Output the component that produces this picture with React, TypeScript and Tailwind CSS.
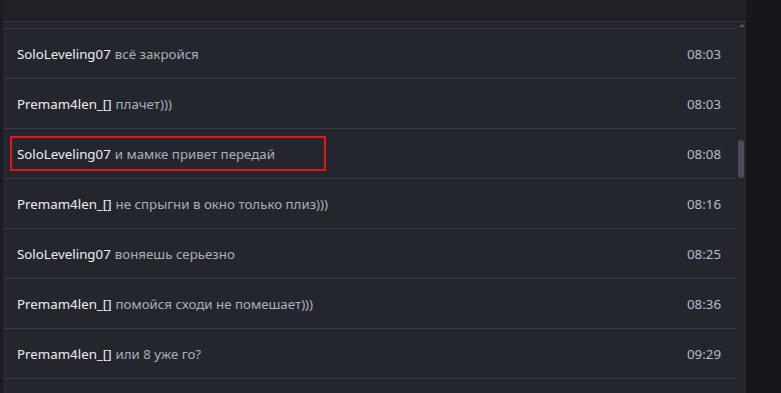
import React from 'react';

const MESSAGES = [
  { user: 'SoloLeveling07', text: 'всё закройся', time: '08:03' },
  { user: 'Premam4len_[]', text: 'плачет)))', time: '08:03' },
  { user: 'SoloLeveling07', text: 'и мамке привет передай', time: '08:08', marked: true },
  { user: 'Premam4len_[]', text: 'не спрыгни в окно только плиз)))', time: '08:16' },
  { user: 'SoloLeveling07', text: 'воняешь серьезно', time: '08:25' },
  { user: 'Premam4len_[]', text: 'помойся сходи не помешает)))', time: '08:36' },
  { user: 'Premam4len_[]', text: 'или 8 уже го?', time: '09:29' },
];

export default function App() {
  return (
    <div className="flex h-[393px] w-[781px] overflow-hidden bg-[#23262d] text-[13.3px] font-['Noto_Sans',sans-serif]">
      <div className="w-[3px] shrink-0 bg-[#1b1d22]" />
      <div className="flex flex-1 flex-col">
        <div className="h-[22px] shrink-0 border-b border-[#383b43] bg-[#1f2127]" />
        <div className="flex flex-1">
          <div className="flex flex-1 flex-col">
            <div className="h-[7px] shrink-0 border-b border-[#383b43]" />
            {MESSAGES.map((m, i) => (
              <div key={i} className="relative flex h-[50px] shrink-0 items-center justify-between border-b border-[#383b43] pl-[14px] pr-[15px] pt-[3px]">
                <div className="flex gap-[4px]">
                  <span className="text-[#eceef2]">{m.user}</span>
                  <span className="text-[#a9b0bc]">{m.text}</span>
                </div>
                <span className="text-[#b3bdcc]">{m.time}</span>
                {m.marked && (
                  <div className="absolute left-[7px] top-[7px] h-[35px] w-[316px] border-2 border-[#e5141b]" />
                )}
              </div>
            ))}
          </div>
          <div className="relative w-[10px] shrink-0 bg-[#23262d]">
            <div className="absolute left-[3px] top-[2px] h-0 w-0 border-x-[3px] border-b-[3px] border-x-transparent border-b-[#5a5d66]" />
            <div className="absolute left-[2px] top-[118px] h-[38px] w-[6px] rounded-full bg-[#4a4d55]" />
          </div>
        </div>
      </div>
      <div className="w-[35px] shrink-0 bg-[#16171b]" />
    </div>
  );
}
